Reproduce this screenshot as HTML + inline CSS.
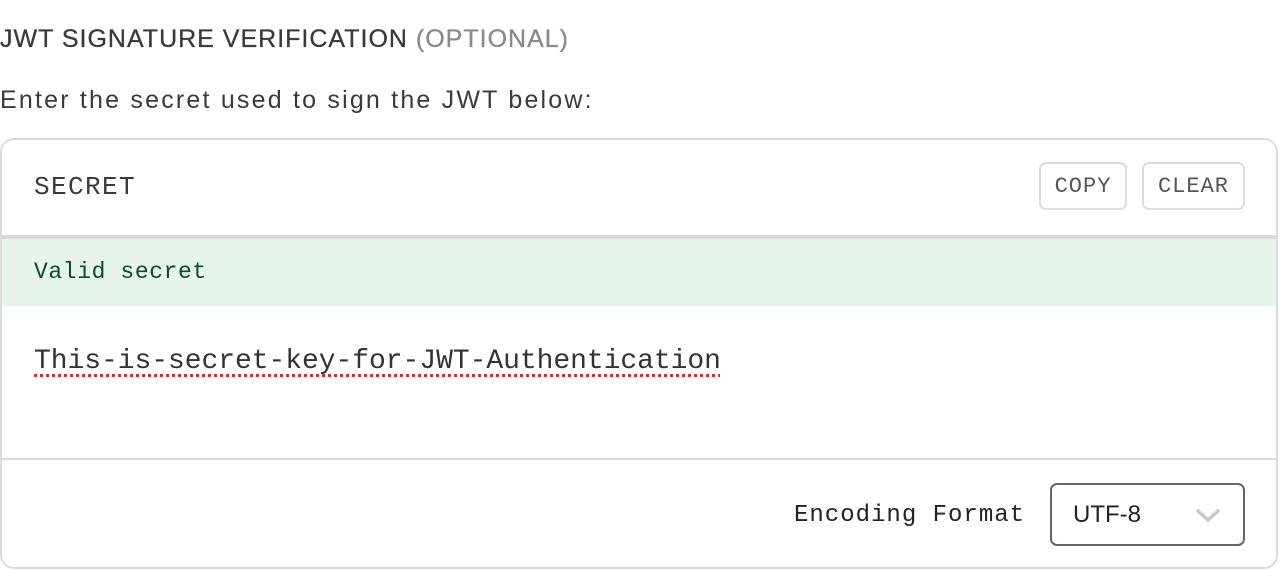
<!DOCTYPE html>
<html><head><meta charset="utf-8"><style>
body{margin:0;width:1280px;height:570px;background:#fff;overflow:hidden;position:relative;font-family:"Liberation Sans",sans-serif;color:#333}
.t{position:absolute;left:0;top:25px;font-size:25px;letter-spacing:1px;color:#3a3a3a;white-space:nowrap;-webkit-text-stroke:0.3px #3a3a3a}
.t span{color:#8a8a8a;-webkit-text-stroke:0.3px #8a8a8a}
.s{position:absolute;left:0;top:86px;font-size:25px;letter-spacing:2.2px;color:#3a3a3a;white-space:nowrap}
.card{position:absolute;left:0;top:138px;width:1274px;height:427px;border:2px solid #dcdcdc;border-radius:14px;overflow:hidden;box-sizing:content-box}
.mono{font-family:"Liberation Mono",monospace}
.hd{position:absolute;left:32px;top:32px;font-size:26px;letter-spacing:1.4px;color:#3a3a3a}
.btn{position:absolute;top:22px;height:48px;border:2px solid #dcdcdc;border-radius:7px;box-sizing:border-box;font-size:22px;letter-spacing:1px;color:#555;line-height:46px;text-align:center}
.line{position:absolute;left:0;right:0;top:95px;height:4px;background:#d8d8d8}
.ok{position:absolute;left:0;right:0;top:99px;height:67px;background:#e6f4ea;color:#0d4a2c;font-size:23px;letter-spacing:0.6px;line-height:67px;padding-left:32px}
.key{position:absolute;left:32px;top:206px;font-size:28px;letter-spacing:-0.05px;color:#333;text-decoration:underline dotted #e02020;text-underline-offset:6px}
.div{position:absolute;left:0;right:0;top:318px;height:2px;background:#dcdcdc}
.enc{position:absolute;left:792px;top:362px;font-size:24px;letter-spacing:1px;color:#222}
.sel{position:absolute;left:1048px;top:343px;width:195px;height:63px;border:2px solid #666;border-radius:7px;box-sizing:border-box;font-size:24px;line-height:59px;padding-left:21px;color:#222}
</style></head><body>
<div class="t">JWT SIGNATURE VERIFICATION <span>(OPTIONAL)</span></div>
<div class="s">Enter the secret used to sign the JWT below:</div>
<div class="card">
<div class="hd mono">SECRET</div>
<div class="btn mono" style="left:1037px;width:88px">COPY</div>
<div class="btn mono" style="left:1140px;width:103px">CLEAR</div>
<div class="line"></div>
<div class="ok mono">Valid secret</div>
<div class="key mono">This-is-secret-key-for-JWT-Authentication</div>
<div class="div"></div>
<div class="enc mono">Encoding Format</div>
<div class="sel">UTF-8<svg style="position:absolute;left:144px;top:24px" width="24" height="14" viewBox="0 0 24 14"><path d="M2 2 L12 11 L22 2" fill="none" stroke="#c8c8c8" stroke-width="3.5" stroke-linecap="round"/></svg></div>
</div>
</body></html>
